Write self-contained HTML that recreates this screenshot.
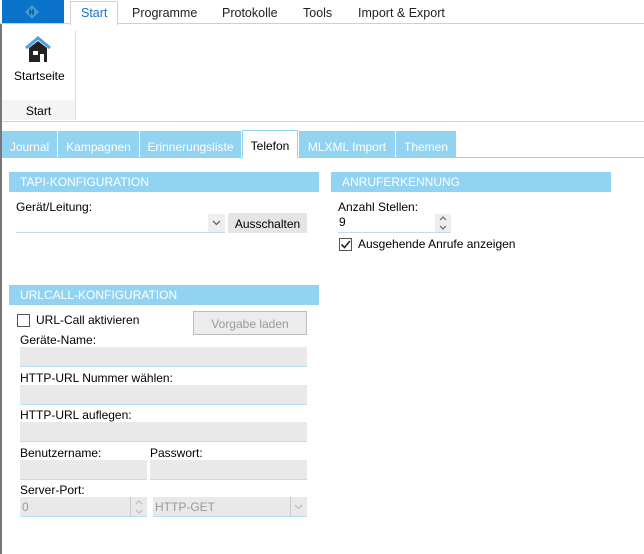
<!DOCTYPE html><html><head><style>
*{margin:0;padding:0;box-sizing:border-box}
body{width:644px;height:554px;position:relative;background:#fff;font-family:"Liberation Sans",sans-serif;font-size:12px;color:#000;overflow:hidden}
.a{position:absolute}
.hdr{position:absolute;background:#92d3f2;color:#fff;font-size:12px;padding:3px 0 0 11px;height:20px}
.lbl{position:absolute;font-size:12px}
.fld{position:absolute;background:#e9e9e9;border-bottom:1px solid #b8dff3;height:20px}
.tab{position:absolute;top:131px;height:26px;background:#92d3f2;color:#fff;font-size:12px;padding-top:9px;text-align:center}
.rt{position:absolute;top:6px;font-size:12.5px;color:#222}
</style></head><body>
<div class="a" style="left:0;top:24px;width:2px;height:530px;background:#777"></div>
<div class="a" style="left:2px;top:0;width:62px;height:24px;background:#0a72c8"></div>
<svg class="a" style="left:25px;top:5px" width="14" height="14"><path d="M7 0L14 7L7 14L0 7Z" fill="#3aa0d8"/><path d="M5 4v6M8 4v6M5 7h4" stroke="#0a4c86" stroke-width="1.2"/></svg>
<div class="a" style="left:0;top:23px;width:644px;height:1px;background:#d0d0d0"></div>
<div class="a" style="left:70px;top:1px;width:48px;height:24px;background:#fff;border:1px solid #d0d0d0;border-bottom:none"></div>
<div class="rt" style="left:81px;color:#1a73c8">Start</div>
<div class="rt" style="left:132px">Programme</div>
<div class="rt" style="left:222px">Protokolle</div>
<div class="rt" style="left:303px">Tools</div>
<div class="rt" style="left:358px">Import &amp; Export</div>
<div class="a" style="left:75px;top:30px;width:1px;height:90px;background:#e0e0e0"></div>
<svg class="a" style="left:24px;top:36px" width="28" height="26"><path d="M2 12L14 2L26 12" fill="none" stroke="#4aa3df" stroke-width="3"/><path d="M5 12L14 5L23 12V26H5Z" fill="#222"/><rect x="9" y="15" width="5" height="4" fill="#fff"/><rect x="16" y="18" width="4" height="8" fill="#fff"/></svg>
<div class="a" style="left:14px;top:69px;font-size:12px">Startseite</div>
<div class="a" style="left:2px;top:100px;width:73px;height:20px;background:#f4f4f4;text-align:center;padding-top:4px;font-size:12px">Start</div>
<div class="a" style="left:2px;top:121px;width:642px;height:1px;background:#d3d3d3"></div>
<div class="tab" style="left:2px;width:55px">Journal</div>
<div class="tab" style="left:58px;width:81px">Kampagnen</div>
<div class="tab" style="left:140px;width:101px">Erinnerungsliste</div>
<div class="a" style="left:242px;top:130px;width:56px;height:29px;background:#fff;border:1px solid #92d3f2;border-bottom:none;text-align:center;padding-top:8px;font-size:12px">Telefon</div>
<div class="tab" style="left:299px;width:96px">MLXML Import</div>
<div class="tab" style="left:396px;width:60px">Themen</div>
<div class="a" style="left:2px;top:157px;width:642px;height:1px;background:#92d3f2"></div>
<div class="a" style="left:242px;top:157px;width:56px;height:1px;background:#fff"></div>

<div class="hdr" style="left:9px;top:172px;width:310px">TAPI-KONFIGURATION</div>
<div class="lbl" style="left:16px;top:200px">Gerät/Leitung:</div>
<div class="a" style="left:16px;top:213px;width:209px;height:20px;border-bottom:1px solid #b8dff3"></div>
<div class="a" style="left:208px;top:214px;width:17px;height:18px;background:#eee"></div>
<svg class="a" style="left:212px;top:220px" width="9" height="6"><path d="M1 1L4.5 4.5L8 1" fill="none" stroke="#666" stroke-width="1.3"/></svg>
<div class="a" style="left:228px;top:213px;width:79px;height:20px;background:#e5e5e5;text-align:center;padding-top:4px">Ausschalten</div>

<div class="hdr" style="left:9px;top:285px;width:310px">URLCALL-KONFIGURATION</div>
<div class="a" style="left:17px;top:314px;width:13px;height:13px;border:1px solid #555;background:#fff"></div>
<div class="lbl" style="left:36px;top:313px">URL-Call aktivieren</div>
<div class="a" style="left:193px;top:311px;width:114px;height:24px;background:#ececec;border:1px solid #bcbcbc;color:#999;text-align:center;padding-top:5px">Vorgabe laden</div>
<div class="lbl" style="left:20px;top:333px">Geräte-Name:</div>
<div class="fld" style="left:20px;top:347px;width:287px"></div>
<div class="lbl" style="left:20px;top:371px">HTTP-URL Nummer wählen:</div>
<div class="fld" style="left:20px;top:385px;width:287px"></div>
<div class="lbl" style="left:20px;top:408px">HTTP-URL auflegen:</div>
<div class="fld" style="left:20px;top:422px;width:287px"></div>
<div class="lbl" style="left:20px;top:446px">Benutzername:</div>
<div class="lbl" style="left:150px;top:446px">Passwort:</div>
<div class="fld" style="left:20px;top:460px;width:127px"></div>
<div class="fld" style="left:150px;top:460px;width:157px"></div>
<div class="lbl" style="left:20px;top:483px">Server-Port:</div>
<div class="fld" style="left:20px;top:497px;width:127px;color:#999;padding:3px 0 0 2px">0</div>
<div class="a" style="left:130px;top:497px;width:1px;height:20px;background:#ccc"></div>
<svg class="a" style="left:135px;top:499px" width="8" height="16"><path d="M1 5L4 2L7 5M1 11L4 14L7 11" fill="none" stroke="#bbb" stroke-width="1.2"/></svg>
<div class="fld" style="left:153px;top:497px;width:154px;color:#999;padding:3px 0 0 2px">HTTP-GET</div>
<div class="a" style="left:290px;top:497px;width:1px;height:20px;background:#ccc"></div>
<svg class="a" style="left:294px;top:504px" width="9" height="6"><path d="M1 1L4.5 4.5L8 1" fill="none" stroke="#bbb" stroke-width="1.2"/></svg>

<div class="hdr" style="left:331px;top:172px;width:280px">ANRUFERKENNUNG</div>
<div class="lbl" style="left:338px;top:200px">Anzahl Stellen:</div>
<div class="a" style="left:338px;top:213px;width:113px;height:20px;border-bottom:1px solid #b8dff3;padding:2px 0 0 1px">9</div>
<div class="a" style="left:435px;top:214px;width:16px;height:18px;background:#eee"></div>
<svg class="a" style="left:439px;top:215px" width="8" height="16"><path d="M1 5L4 2L7 5M1 11L4 14L7 11" fill="none" stroke="#666" stroke-width="1.2"/></svg>
<div class="a" style="left:339px;top:238px;width:13px;height:13px;border:1px solid #555;background:#fff"></div>
<svg class="a" style="left:340px;top:239px" width="11" height="11"><path d="M1.5 5.5L4.5 8.5L10 2" fill="none" stroke="#222" stroke-width="1.6"/></svg>
<div class="lbl" style="left:358px;top:237px">Ausgehende Anrufe anzeigen</div>
</body></html>
